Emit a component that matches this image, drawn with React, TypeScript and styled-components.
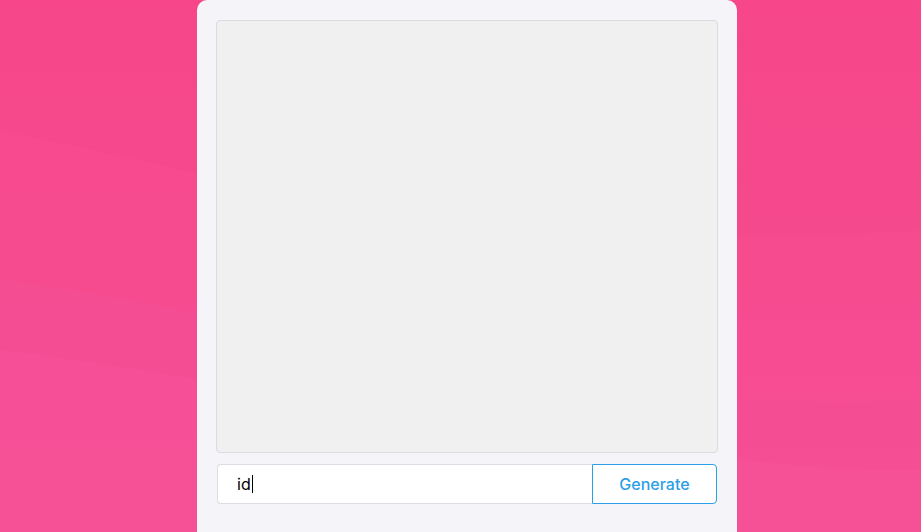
import React from "react";
import styled, { createGlobalStyle } from "styled-components";

const Global = createGlobalStyle`
  html, body { margin: 0; padding: 0; height: 100%; overflow: hidden; }
  body { font-family: Inter, "Liberation Sans", Arial, sans-serif; background: #f6488a; }
  #root { height: 100%; }
`;

const Page = styled.div`
  position: relative;
  width: 921px;
  height: 532px;
  overflow: hidden;
  background: linear-gradient(180deg, #f7468a 0%, #f54a8e 50%, #f5529a 100%);
  display: flex;
  align-items: flex-start;
`;

const Waves = styled.svg`
  position: absolute;
  inset: 0;
  width: 100%;
  height: 100%;
  pointer-events: none;
`;

const Card = styled.div`
  position: relative;
  margin-left: 197px;
  width: 540px;
  height: 560px;
  box-sizing: border-box;
  background: #f4f4f9;
  border-radius: 10px 10px 0 0;
  padding: 20px 20px 0 19px;
  display: flex;
  flex-direction: column;
  gap: 11px;
`;

const Canvas = styled.div`
  width: 502px;
  height: 433px;
  box-sizing: border-box;
  background: #f0f0f0;
  border: 1px solid #dcdce0;
  border-radius: 4px;
`;

const Row = styled.form`
  display: flex;
  margin-left: 1px;
  width: 500px;
  height: 40px;
`;

const Field = styled.div`
  position: relative;
  flex: 1;
  min-width: 0;
  display: flex;
`;

const Input = styled.input`
  flex: 1;
  min-width: 0;
  height: 40px;
  box-sizing: border-box;
  border: 1px solid #dcdce4;
  border-right: none;
  border-radius: 4px 0 0 4px;
  background: #ffffff;
  padding: 0 19px;
  font-family: inherit;
  font-size: 16px;
  color: #000;
  outline: none;
  caret-color: transparent;
`;

const Caret = styled.span`
  position: absolute;
  left: 35px;
  top: 11px;
  width: 1px;
  height: 18px;
  background: #000;
  pointer-events: none;
`;

const Button = styled.button`
  width: 125px;
  height: 40px;
  box-sizing: border-box;
  border: 1px solid #2c9fe6;
  border-radius: 0 4px 4px 0;
  background: #ffffff;
  color: #2c9fe6;
  font-family: inherit;
  font-size: 16px;
  font-weight: 500;
  cursor: pointer;
`;

export default function App() {
  return (
    <>
      <Global />
      <Page>
        <Waves viewBox="0 0 921 532" preserveAspectRatio="none">
          <path d="M0 130 C 200 170, 500 260, 921 230 L921 532 L0 532 Z" fill="#f74d92" opacity="0.55" />
          <path d="M0 280 C 250 310, 600 420, 921 400 L921 532 L0 532 Z" fill="#f44f94" opacity="0.6" />
          <path d="M0 350 C 250 380, 650 470, 921 470 L921 532 L0 532 Z" fill="#f7529a" opacity="0.6" />
        </Waves>
        <Card>
          <Canvas />
          <Row onSubmit={(e) => e.preventDefault()}>
            <Field>
              <Input defaultValue="id" />
              <Caret />
            </Field>
            <Button type="submit">Generate</Button>
          </Row>
        </Card>
      </Page>
    </>
  );
}
